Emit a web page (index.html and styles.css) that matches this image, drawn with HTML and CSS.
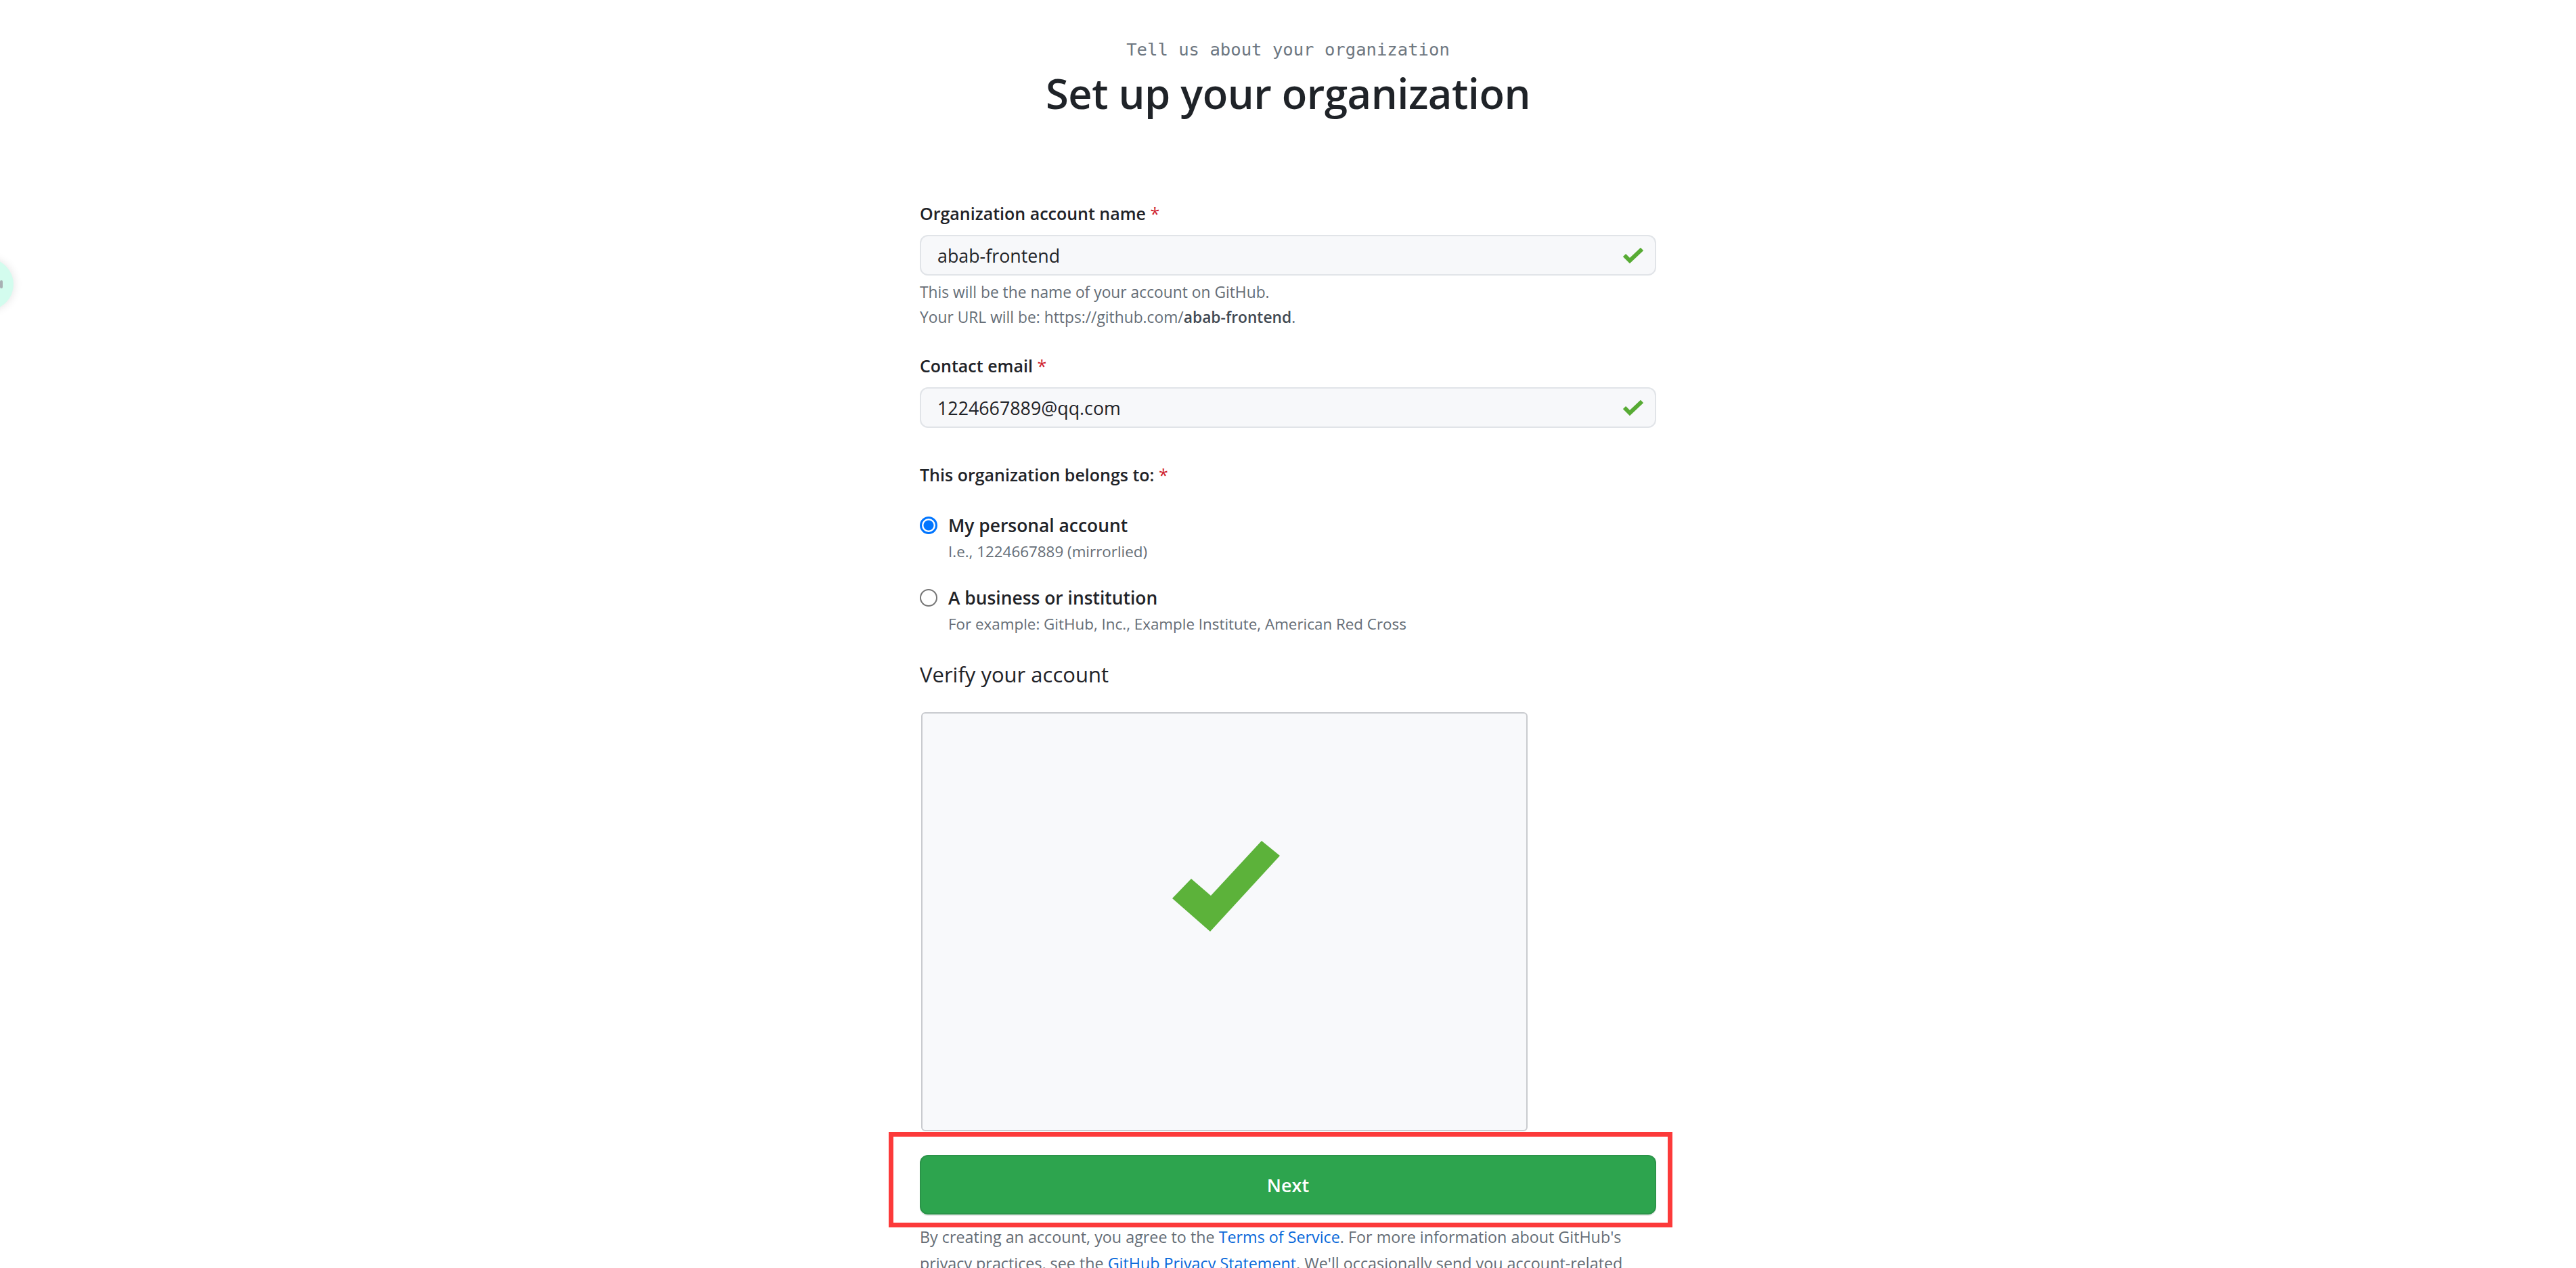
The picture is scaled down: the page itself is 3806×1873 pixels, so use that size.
FILE: index.html
```html
<!DOCTYPE html>
<html lang="en">
<head>
<meta charset="utf-8">
<title>Set up your organization</title>
<link rel="stylesheet" href="styles.css">
</head>
<body>
<div class="side-bubble"><span class="side-dot"></span></div>
<main class="page">
  <header class="head">
    <p class="kicker">Tell us about your organization</p>
    <h1 class="title">Set up your organization</h1>
  </header>

  <form class="form">
    <div class="field">
      <label class="label">Organization account name <span class="req">*</span></label>
      <div class="input">
        <span class="input-text">abab-frontend</span>
        <svg class="ok" viewBox="0 0 30 23"><polyline points="2,11 10,19 28,2" fill="none" stroke="#57ab34" stroke-width="6"/></svg>
      </div>
      <p class="note">This will be the name of your account on GitHub.<br>Your URL will be: https://github.com/<b>abab-frontend</b>.</p>
    </div>

    <div class="field field-email">
      <label class="label">Contact email <span class="req">*</span></label>
      <div class="input">
        <span class="input-text">1224667889@qq.com</span>
        <svg class="ok" viewBox="0 0 30 23"><polyline points="2,11 10,19 28,2" fill="none" stroke="#57ab34" stroke-width="6"/></svg>
      </div>
    </div>

    <div class="field field-owner">
      <label class="label">This organization belongs to: <span class="req">*</span></label>
      <div class="radio-opt">
        <span class="radio radio-on"></span>
        <div>
          <div class="radio-title">My personal account</div>
          <div class="radio-sub">I.e., 1224667889 (mirrorlied)</div>
        </div>
      </div>
      <div class="radio-opt radio-opt-2">
        <span class="radio"></span>
        <div>
          <div class="radio-title">A business or institution</div>
          <div class="radio-sub">For example: GitHub, Inc., Example Institute, American Red Cross</div>
        </div>
      </div>
    </div>

    <h2 class="verify-title">Verify your account</h2>
    <div class="verify-box">
      <svg class="verify-check" viewBox="0 0 896 619"><polygon points="371,275 399,246 428,271 503,190 530,212 427,324" fill="#5cb23a"/></svg>
    </div>

    <div class="submit-wrap">
      <button type="button" class="btn-next">Next</button>
      <span class="highlight"></span>
    </div>

    <p class="legal">By creating an account, you agree to the <a href="#">Terms of Service</a>. For more information about GitHub's privacy practices, see the <a href="#">GitHub Privacy Statement</a>. We'll occasionally send you account-related emails.</p>
  </form>
</main>
</body>
</html>
```

FILE: styles.css
```css
html, body {
  margin: 0;
  padding: 0;
  overflow: hidden;
  background: #ffffff;
}

body {
  font-family: "Open Sans", "Noto Sans", sans-serif;
  color: #1f2328;
  position: relative;
  min-height: 1873px;
}

.side-bubble {
  position: absolute;
  left: -56px;
  top: 382px;
  width: 76px;
  height: 76px;
  border-radius: 50%;
  background: #d3fcee;
  box-shadow: 0 0 14px rgba(0, 0, 0, 0.12);
}

.side-dot {
  position: absolute;
  right: 16px;
  top: 32px;
  width: 4px;
  height: 12px;
  background: #a8b0b3;
  border-radius: 2px;
}

.page {
  padding-top: 55px;
}

.head {
  text-align: center;
}

.kicker {
  margin: 0;
  font-family: "DejaVu Sans Mono", "Liberation Mono", monospace;
  font-size: 25.6px;
  line-height: 36px;
  color: #6e7781;
}

.title {
  margin: 8px 0 0;
  font-size: 61.5px;
  font-weight: 600;
  line-height: 76px;
  color: #1f2328;
  letter-spacing: -0.5px;
}

.form {
  width: 1088px;
  margin: 122px auto 0;
}

.label {
  display: block;
  font-size: 25px;
  font-weight: 600;
  line-height: 36px;
}

.req {
  color: #cf222e;
  font-weight: 400;
}

.input {
  margin-top: 14px;
  height: 60px;
  box-sizing: border-box;
  border: 2px solid #e1e4e8;
  border-radius: 12px;
  background: #f7f8fa;
  display: flex;
  align-items: center;
  padding: 0 17px 0 24px;
}

.input-text {
  flex: 1;
  font-size: 26.8px;
  color: #1f2328;
}

.ok {
  width: 30px;
  height: 23px;
}

.note {
  margin: 6px 0 0;
  font-size: 22.8px;
  line-height: 37px;
  color: #656d76;
}

.note b {
  color: #424a53;
  font-weight: 600;
}

.field-email {
  margin-top: 35px;
}

.field-owner {
  margin-top: 51px;
}

.radio-opt {
  display: flex;
  align-items: flex-start;
  gap: 16px;
  margin-top: 39px;
}

.radio-opt-2 {
  margin-top: 34px;
}

.radio {
  flex: none;
  width: 26px;
  height: 26px;
  box-sizing: border-box;
  border-radius: 50%;
  border: 2px solid #767676;
  background: #ffffff;
  margin-top: 5px;
}

.radio-on {
  border: 3px solid #0075ff;
  background: radial-gradient(circle, #0075ff 0 7px, #ffffff 8px);
}

.radio-title {
  font-size: 26.4px;
  font-weight: 600;
  line-height: 36px;
}

.radio-sub {
  margin-top: 4px;
  font-size: 22.4px;
  line-height: 33px;
  color: #656d76;
}

.verify-title {
  margin: 38px 0 0;
  font-size: 31px;
  font-weight: 400;
  line-height: 40px;
}

.verify-box {
  margin: 36px 0 0 2px;
  width: 896px;
  height: 619px;
  box-sizing: border-box;
  border: 2px solid #c9cbcf;
  border-radius: 6px;
  background: #f8f9fb;
  overflow: hidden;
}

.verify-check {
  display: block;
  width: 896px;
  height: 619px;
  margin: -2px 0 0 -2px;
}

.submit-wrap {
  position: relative;
  margin-top: 35px;
}

.btn-next {
  display: block;
  width: 100%;
  height: 88px;
  border: 2px solid rgba(31, 35, 40, 0.12);
  border-radius: 12px;
  background: #2da44e;
  color: #ffffff;
  font-family: "Open Sans", "Noto Sans", sans-serif;
  font-size: 27px;
  font-weight: 600;
  box-shadow: 0 2px 0 rgba(31, 35, 40, 0.1);
}

.highlight {
  position: absolute;
  left: -46px;
  top: -34px;
  right: -24px;
  bottom: -19px;
  border: 7px solid #fc3a3a;
  pointer-events: none;
}

.legal {
  margin: 14px 0 0;
  font-size: 23.3px;
  line-height: 39px;
  color: #656d76;
}

.legal a {
  color: #0969da;
  text-decoration: none;
}
```
